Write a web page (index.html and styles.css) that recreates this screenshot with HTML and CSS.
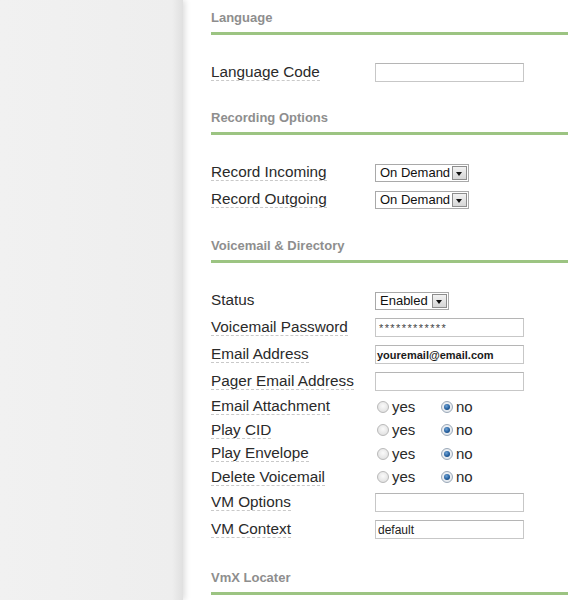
FILE: index.html
```html
<!DOCTYPE html>
<html>
<head>
<meta charset="utf-8">
<link rel="stylesheet" href="styles.css">
</head>
<body>
<div class="layout">
  <aside class="sidebar"></aside>
  <main class="content">
    <section class="section">
      <h3 class="section-title">Language</h3>
      <div class="rows">
        <div class="row"><span class="label">Language Code</span><span class="input"></span></div>
      </div>
    </section>
    <section class="section">
      <h3 class="section-title">Recording Options</h3>
      <div class="rows rows-mid">
        <div class="row"><span class="label">Record Incoming</span><span class="select w93"><span class="select-text">On Demand</span><span class="select-btn"></span></span></div>
        <div class="row"><span class="label">Record Outgoing</span><span class="select w93"><span class="select-text">On Demand</span><span class="select-btn"></span></span></div>
      </div>
    </section>
    <section class="section">
      <h3 class="section-title">Voicemail &amp; Directory</h3>
      <div class="rows rows-last">
        <div class="row"><span class="label plain">Status</span><span class="select w73"><span class="select-text">Enabled</span><span class="select-btn"></span></span></div>
        <div class="row"><span class="label">Voicemail Password</span><span class="input"><span class="pw">************</span></span></div>
        <div class="row"><span class="label">Email Address</span><span class="input"><span class="email">youremail@email.com</span></span></div>
        <div class="row"><span class="label">Pager Email Address</span><span class="input"></span></div>
        <div class="row row-radio"><span class="label">Email Attachment</span><span class="radios"><span class="opt"><span class="radio"></span>yes</span><span class="opt"><span class="radio on"></span>no</span></span></div>
        <div class="row row-radio"><span class="label">Play CID</span><span class="radios"><span class="opt"><span class="radio"></span>yes</span><span class="opt"><span class="radio on"></span>no</span></span></div>
        <div class="row row-radio"><span class="label">Play Envelope</span><span class="radios"><span class="opt"><span class="radio"></span>yes</span><span class="opt"><span class="radio on"></span>no</span></span></div>
        <div class="row row-radio"><span class="label">Delete Voicemail</span><span class="radios"><span class="opt"><span class="radio"></span>yes</span><span class="opt"><span class="radio on"></span>no</span></span></div>
        <div class="row"><span class="label">VM Options</span><span class="input"></span></div>
        <div class="row"><span class="label">VM Context</span><span class="input"><span class="val">default</span></span></div>
      </div>
    </section>
    <section class="section">
      <h3 class="section-title">VmX Locater</h3>
    </section>
  </main>
</div>
</body>
</html>
```

FILE: styles.css
```css
html, body {
  margin: 0;
  padding: 0;
  background: #ffffff;
  font-family: "Liberation Sans", Arial, sans-serif;
}

.layout {
  display: flex;
  min-height: 600px;
}

.sidebar {
  flex: 0 0 183px;
  background: linear-gradient(to right, #f1f1f1 0%, #eeeeee 94%, #e0e0e0 100%);
  box-shadow: 2px 0 6px rgba(0, 0, 0, 0.14);
  position: relative;
  z-index: 1;
}

.content {
  flex: 1;
  padding: 10px 14px 0 28px;
}

.section-title {
  margin: 0;
  font-size: 13px;
  line-height: 16px;
  font-weight: bold;
  color: #8e8e8e;
  padding-bottom: 6px;
  border-bottom: 3px solid #9cc482;
}

.rows {
  padding: 24px 0 24px;
}

.rows-mid {
  padding-bottom: 25px;
}

.rows-last {
  padding-bottom: 27px;
}

.row {
  display: grid;
  grid-template-columns: 164px auto;
  align-items: center;
  justify-items: start;
  height: 27px;
}

.row-radio {
  height: 23.5px;
}

.label {
  font-size: 15.3px;
  line-height: 16px;
  color: #2a2a2a;
  border-bottom: 1px dashed #c9c9c9;
}

.label.plain {
  border-bottom-color: transparent;
}

.input {
  box-sizing: border-box;
  width: 149px;
  height: 19px;
  border: 1px solid #c7c7c7;
  border-top-color: #b5b5b5;
  background: #fff;
  display: flex;
  align-items: center;
  padding-left: 1px;
}

.pw {
  font-size: 11px;
  color: #444;
  letter-spacing: 1.4px;
  margin-top: 1px;
  padding-left: 2px;
}

.email {
  font-weight: bold;
  font-size: 11px;
  color: #1a1a1a;
}

.val {
  font-size: 12px;
  color: #222;
  padding-left: 1px;
}

.select {
  box-sizing: border-box;
  height: 18px;
  border: 1px solid #a9a9a9;
  background: #fff;
  display: flex;
  align-items: center;
  justify-content: space-between;
  padding: 0 1px 0 4px;
}

.w93 { width: 94px; }
.w73 { width: 74px; }

.select-text {
  font-size: 13px;
  color: #111;
  line-height: 14px;
}

.select-btn {
  box-sizing: border-box;
  width: 15px;
  height: 14px;
  border: 1px solid #8d8d8d;
  background: linear-gradient(#f2f2f2, #d6d6d6);
  position: relative;
}

.select-btn::after {
  content: "";
  position: absolute;
  left: 3px;
  top: 5px;
  border-left: 3.5px solid transparent;
  border-right: 3.5px solid transparent;
  border-top: 4px solid #111;
}

.radios {
  display: flex;
  align-items: center;
  padding-left: 2px;
}

.opt {
  display: flex;
  align-items: center;
  font-size: 15px;
  color: #2a2a2a;
  width: 64px;
  line-height: 16px;
}

.radio {
  box-sizing: border-box;
  width: 12px;
  height: 12px;
  border-radius: 50%;
  border: 1px solid #b9b9b9;
  background: radial-gradient(circle at 50% 40%, #fafafa 0%, #e4e4e4 70%, #d2d2d2 100%);
  margin-right: 3px;
  position: relative;
}

.radio.on {
  border-color: #9aa8b8;
  background: radial-gradient(circle at 50% 40%, #f4f6f8 0%, #dfe4ea 100%);
}

.radio.on::after {
  content: "";
  position: absolute;
  left: 2px;
  top: 2px;
  width: 6px;
  height: 6px;
  border-radius: 50%;
  background: radial-gradient(circle at 40% 35%, #6fa3d6 0%, #1f5a99 60%, #123c6b 100%);
}
```
